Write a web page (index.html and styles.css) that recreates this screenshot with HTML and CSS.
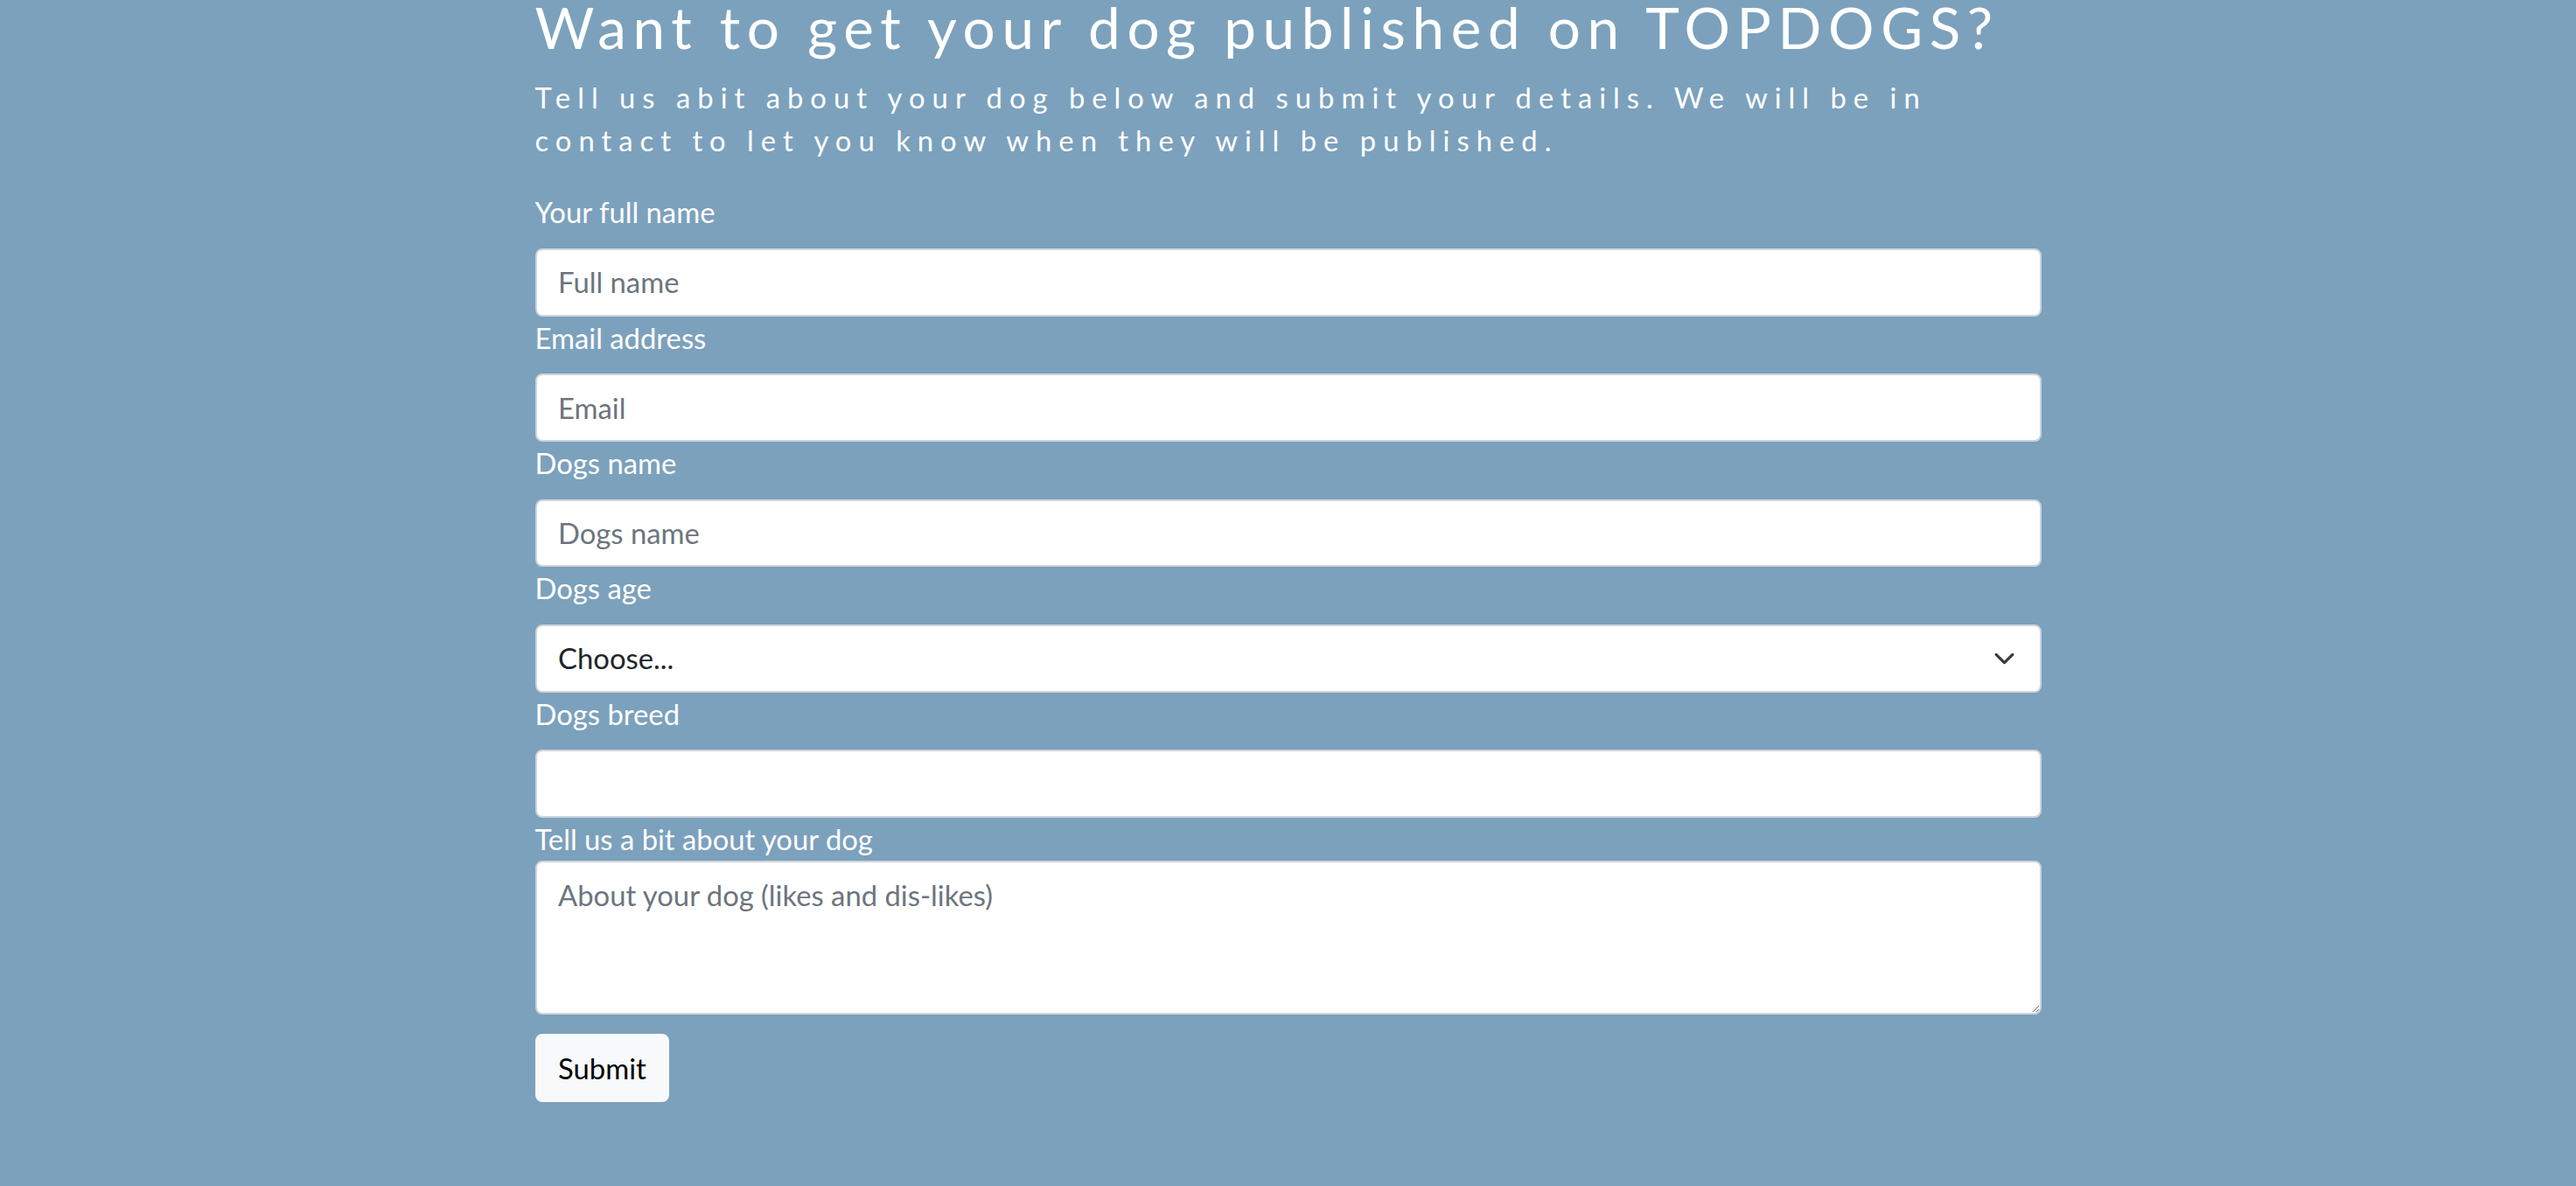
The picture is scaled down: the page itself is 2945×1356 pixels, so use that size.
FILE: index.html
```html
<!DOCTYPE html>
<html lang="en">
<head>
<meta charset="utf-8">
<title>TOPDOGS - Submit your dog</title>
<link rel="stylesheet" href="styles.css">
</head>
<body>
<main class="page">
  <section class="container">
    <h2 class="title">Want to get your dog published on TOPDOGS?</h2>
    <p class="intro">Tell us abit about your dog below and submit your details. We will be in contact to let you know when they will be published.</p>
    <form class="dog-form">
      <label class="form-label" for="fullName">Your full name</label>
      <input class="form-control" type="text" id="fullName" placeholder="Full name">

      <label class="form-label" for="email">Email address</label>
      <input class="form-control" type="email" id="email" placeholder="Email">

      <label class="form-label" for="dogName">Dogs name</label>
      <input class="form-control" type="text" id="dogName" placeholder="Dogs name">

      <label class="form-label" for="dogAge">Dogs age</label>
      <div class="select-wrap">
        <select class="form-select" id="dogAge">
          <option selected>Choose...</option>
          <option>Under 1 year</option>
          <option>1 - 3 years</option>
          <option>4 - 7 years</option>
          <option>8+ years</option>
        </select>
        <svg class="chevron" viewBox="0 0 16 16" width="25" height="25" aria-hidden="true">
          <path d="M2 5l6 6 6-6" fill="none" stroke="#343a40" stroke-width="2" stroke-linecap="round" stroke-linejoin="round"/>
        </svg>
      </div>

      <label class="form-label" for="dogBreed">Dogs breed</label>
      <input class="form-control" type="text" id="dogBreed">

      <label class="plain-label" for="about">Tell us a bit about your dog</label>
      <textarea class="form-control textarea" id="about" rows="3" placeholder="About your dog (likes and dis-likes)"></textarea>

      <div class="actions">
        <button class="btn-light" type="submit">Submit</button>
      </div>
    </form>
  </section>
</main>
</body>
</html>
```

FILE: styles.css
```css
html {
  font-size: 32.8px;
}

body {
  margin: 0;
  background: #7ca1bc;
  font-family: Lato, "Open Sans", sans-serif;
  color: #ffffff;
  line-height: 1.5;
}

.page {
  min-height: 100vh;
  display: flex;
  justify-content: center;
}

.container {
  width: 1722px;
  margin-top: -8px;
  display: flex;
  flex-direction: column;
}

.title {
  margin: 0 0 0.5rem 0;
  font-size: 2rem;
  font-weight: 400;
  line-height: 1.2;
  letter-spacing: 0.116em;
  white-space: nowrap;
}

.intro {
  margin: 0 0 1rem 0;
  font-size: 1rem;
  letter-spacing: 0.244em;
}

.dog-form {
  display: flex;
  flex-direction: column;
}

.form-label {
  display: block;
  margin-bottom: 0.5rem;
  font-size: 1rem;
}

.plain-label {
  display: block;
  font-size: 1rem;
}

.form-control,
.form-select {
  display: block;
  box-sizing: border-box;
  width: 100%;
  margin: 0;
  padding: 0.375rem 0.75rem;
  font-family: inherit;
  font-size: 1rem;
  line-height: 1.5;
  color: #212529;
  background: #ffffff;
  border: 2px solid #ced4da;
  border-radius: 8px;
  outline: none;
}

.form-control::placeholder {
  color: #6c757d;
  opacity: 1;
}

.textarea {
  resize: vertical;
  min-height: 176px;
}

.select-wrap {
  position: relative;
}

.form-select {
  appearance: none;
  -webkit-appearance: none;
  padding-right: 2.25rem;
}

.chevron {
  position: absolute;
  right: 30px;
  top: 50%;
  transform: translateY(-50%);
  pointer-events: none;
}

.actions {
  margin-top: 22px;
}

.btn-light {
  font-family: inherit;
  font-size: 1rem;
  line-height: 1.5;
  padding: 0.375rem 0.75rem;
  color: #000000;
  background: #f8f9fa;
  border: 2px solid #f8f9fa;
  border-radius: 8px;
  cursor: pointer;
}
```
